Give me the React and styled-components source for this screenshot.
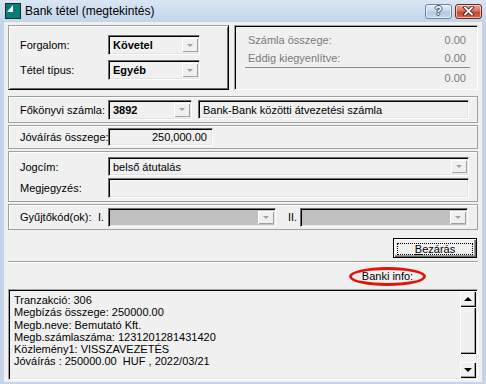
import React from 'react';
import styled, { createGlobalStyle } from 'styled-components';

const GlobalStyle = createGlobalStyle`
  html, body { margin: 0; padding: 0; background: #c4d5eb; }
  body {
    font-family: "Liberation Sans", Arial, sans-serif;
    font-size: 11px;
    color: #000;
  }
`;

const Window = styled.div`
  width: 486px;
  height: 384px;
  display: flex;
  flex-direction: column;
  background: #c4d5eb;
  overflow: hidden;
`;

const TitleBar = styled.div`
  height: 22px;
  flex-shrink: 0;
  display: flex;
  align-items: center;
  padding: 0 4px 0 5px;
  background: linear-gradient(to bottom, #d9e5f3, #c3d5eb);
`;

const TitleText = styled.span`
  margin-left: 4px;
  font-size: 12px;
  color: #000;
  flex: 1;
`;

const CaptionButton = styled.div`
  width: 27px;
  height: 15px;
  box-sizing: border-box;
  margin-left: ${p => (p.$close ? '3px' : '0')};
  border: 1px solid ${p => (p.$close ? '#6e2a22' : '#6e84a3')};
  border-radius: 3px;
  display: flex;
  align-items: center;
  justify-content: center;
  background: ${p =>
    p.$close
      ? 'linear-gradient(to bottom, #e9a99c 0%, #d7705f 45%, #c24832 55%, #cf6a50 100%)'
      : 'linear-gradient(to bottom, #e4edf8 0%, #c9d9ee 45%, #b4c9e4 55%, #c7d8ee 100%)'};
  box-shadow: inset 0 0 0 1px rgba(255, 255, 255, 0.55);
`;

const HelpGlyph = styled.span`
  font-family: "Liberation Sans", Arial, sans-serif;
  font-weight: bold;
  font-size: 12px;
  line-height: 1;
  color: #fff;
  text-shadow: 1px 0 #3a4f6e, -1px 0 #3a4f6e, 0 1px #3a4f6e, 0 -1px #3a4f6e;
`;

const Body = styled.div`
  flex: 1;
  margin: 0 4px 2px 4px;
  background: #f0f0f0;
  display: flex;
  flex-direction: column;
  padding: 3px 4px 0 4px;
`;

const TopRow = styled.div`
  display: flex;
  height: 65px;
  gap: 5px;
  flex-shrink: 0;
`;

const RaisedPanel = styled.div`
  width: 221px;
  box-sizing: border-box;
  border: 1px solid;
  border-color: #a0a0a0 #000 #000 #a0a0a0;
  box-shadow: inset 1px 1px #fff, inset -1px -1px #696969;
  padding: 9px 0 0 11px;
  display: grid;
  grid-template-columns: 88px 92px;
  grid-auto-rows: 20px;
  row-gap: 5px;
  align-items: center;
`;

const SunkenPanel = styled.div`
  flex: 1;
  box-sizing: border-box;
  border: 1px solid;
  border-color: #a0a0a0 #fff #fff #a0a0a0;
  box-shadow: inset 1px 1px #000;
  padding: 4px 11px 0 13px;
  display: flex;
  flex-direction: column;
  color: #7a7a7a;
`;

const SumRow = styled.div`
  height: ${p => p.$h}px;
  display: flex;
  align-items: center;
  justify-content: space-between;
`;

const SumLine = styled.div`
  height: 1px;
  background: #8a8a8a;
  margin: 0 -4px 0 -3px;
`;

const Panel = styled.div`
  box-sizing: border-box;
  height: ${p => p.$h}px;
  margin-top: ${p => p.$mt}px;
  flex-shrink: 0;
  border: 1px solid #a0a0a0;
  box-shadow: inset 1px 1px #fff;
  padding: ${p => p.$pad || '0 8px 0 11px'};
  display: flex;
  flex-direction: ${p => (p.$col ? 'column' : 'row')};
  align-items: ${p => (p.$col ? 'stretch' : 'center')};
  gap: ${p => p.$gap || 0}px;
`;

const Row = styled.div`
  display: flex;
  align-items: center;
`;

const Label = styled.span`
  width: ${p => p.$w || 88}px;
  flex-shrink: 0;
  white-space: nowrap;
`;

const Sunken = styled.div`
  box-sizing: border-box;
  height: ${p => p.$h || 19}px;
  width: ${p => (p.$w ? `${p.$w}px` : 'auto')};
  flex: ${p => (p.$w ? '0 0 auto' : '1')};
  border: 1px solid;
  border-color: #6d6d6d #fff #fff #6d6d6d;
  box-shadow: inset 1px 1px #000, inset -1px -1px #e3e3e3;
  background: ${p => (p.$disabled ? '#c0c0c0' : '#f0f0f0')};
  display: flex;
  align-items: center;
  padding: 0 ${p => (p.$right ? '5px' : '0')} 0 ${p => (p.$right ? '0' : '4px')};
  justify-content: ${p => (p.$right ? 'flex-end' : 'flex-start')};
  font-weight: ${p => (p.$bold ? 'bold' : 'normal')};
  white-space: nowrap;
`;

const ComboText = styled.span`
  flex: 1;
  overflow: hidden;
`;

const DropButton = styled.div`
  width: 16px;
  align-self: stretch;
  margin: 2px 1px 2px 0;
  box-sizing: border-box;
  background: #f0f0f0;
  box-shadow: inset 1px 1px #fff, inset -1px -1px #a0a0a0;
  display: flex;
  align-items: center;
  justify-content: center;
  &::after {
    content: '';
    border-left: 3px solid transparent;
    border-right: 3px solid transparent;
    border-top: 3px solid #a0a0a0;
  }
`;

const Combo = ({ text, ...rest }) => (
  <Sunken {...rest}>
    <ComboText>{text}</ComboText>
    <DropButton />
  </Sunken>
);

const Roman = styled.span`
  width: ${p => p.$w}px;
  flex-shrink: 0;
  margin-left: ${p => p.$ml || 0}px;
`;

const ButtonRow = styled.div`
  margin-top: 8px;
  display: flex;
  justify-content: flex-end;
  padding-right: 1px;
  flex-shrink: 0;
`;

const PushButton = styled.div`
  width: 84px;
  height: 20px;
  box-sizing: border-box;
  border: 1px solid #000;
  background: #f0f0f0;
  box-shadow: inset 1px 1px #fff, inset -1px -1px #696969, inset -2px -2px #a0a0a0;
  padding: 4px 3px 2px 3px;
  display: flex;
`;

const FocusRing = styled.div`
  flex: 1;
  border: 1px dotted #000;
  display: flex;
  align-items: center;
  justify-content: center;
  line-height: 1;
  & u { text-decoration: underline; }
`;

const Separator = styled.div`
  margin-top: 3px;
  border-top: 1px solid #a0a0a0;
  border-bottom: 1px solid #fff;
  flex-shrink: 0;
`;

const InfoRow = styled.div`
  height: 26px;
  flex-shrink: 0;
  display: flex;
  align-items: center;
  justify-content: flex-end;
  padding-right: 52px;
`;

const Circled = styled.span`
  width: 77px;
  height: 19px;
  box-sizing: border-box;
  border: 3px solid #e3120b;
  border-radius: 50%;
  display: flex;
  align-items: center;
  justify-content: center;
`;

const Memo = styled.div`
  height: 91px;
  box-sizing: border-box;
  flex-shrink: 0;
  border: 1px solid;
  border-color: #a0a0a0 #fff #fff #a0a0a0;
  box-shadow: inset 1px 1px #000, inset -1px -1px #e3e3e3;
  display: flex;
`;

const MemoText = styled.div`
  flex: 1;
  padding: 4px 0 0 5px;
  line-height: 12.3px;
  white-space: pre;
`;

const ScrollBar = styled.div`
  width: 16px;
  margin: 1px 1px 1px 0;
  display: flex;
  flex-direction: column;
`;

const ScrollPart = styled.div`
  height: ${p => p.$h}px;
  flex-shrink: 0;
  box-sizing: border-box;
  background: #f0f0f0;
  box-shadow: inset 1px 1px #fff, inset -1px -1px #000, inset -2px -2px #a0a0a0;
  display: flex;
  align-items: center;
  justify-content: center;
`;

const Arrow = styled.span`
  width: 0;
  height: 0;
  border-left: 4px solid transparent;
  border-right: 4px solid transparent;
  ${p => (p.$up ? 'border-bottom: 4px solid #000;' : 'border-top: 4px solid #000;')}
`;

const Track = styled.div`
  height: 8px;
  flex-shrink: 0;
  background: repeating-conic-gradient(#fff 0 25%, #e6e6e6 0 50%) 0 0 / 2px 2px;
`;

const AppIcon = () => (
  <svg width="16" height="16" viewBox="0 0 16 16">
    <rect x="0.5" y="0.5" width="15" height="15" fill="#077d78" stroke="#1c2b2a" />
    <polygon points="2,9 8,2 8,9" fill="#fff" />
  </svg>
);

const CloseGlyph = () => (
  <svg width="13" height="10" viewBox="0 0 13 10">
    <path d="M3 1.5 L10 8.5 M10 1.5 L3 8.5" stroke="#5a1d16" strokeWidth="3.6" strokeLinecap="square" />
    <path d="M3 1.5 L10 8.5 M10 1.5 L3 8.5" stroke="#fff" strokeWidth="1.8" strokeLinecap="square" />
  </svg>
);

const memoLines = [
  'Tranzakció: 306',
  'Megbízás összege: 250000.00',
  'Megb.neve: Bemutató Kft.',
  'Megb.számlaszáma: 1231201281431420',
  'Közlemény1: VISSZAVEZETÉS',
  'Jóváírás : 250000.00  HUF , 2022/03/21',
];

export default function App() {
  return (
    <>
      <GlobalStyle />
      <Window>
        <TitleBar>
          <AppIcon />
          <TitleText>Bank tétel (megtekintés)</TitleText>
          <CaptionButton><HelpGlyph>?</HelpGlyph></CaptionButton>
          <CaptionButton $close><CloseGlyph /></CaptionButton>
        </TitleBar>
        <Body>
          <TopRow>
            <RaisedPanel>
              <Label>Forgalom:</Label>
              <Combo text="Követel" $bold $h={20} />
              <Label>Tétel típus:</Label>
              <Combo text="Egyéb" $bold $h={20} />
            </RaisedPanel>
            <SunkenPanel>
              <SumRow $h={19}><span>Számla összege:</span><span>0.00</span></SumRow>
              <SumRow $h={18}><span>Eddig kiegyenlítve:</span><span>0.00</span></SumRow>
              <SumLine />
              <SumRow $h={20}><span />0.00</SumRow>
            </SunkenPanel>
          </TopRow>

          <Panel $h={27} $mt={6}>
            <Label>Főkönyvi számla:</Label>
            <Combo text="3892" $bold $w={84} $h={20} />
            <Sunken $h={19} style={{ marginLeft: 6 }}>Bank-Bank közötti átvezetési számla</Sunken>
          </Panel>

          <Panel $h={24} $mt={2}>
            <Label>Jóváírás összege:</Label>
            <Sunken $w={105} $h={18} $right>250,000.00</Sunken>
          </Panel>

          <Panel $h={51} $mt={2} $col $gap={2} $pad="5px 8px 0 11px">
            <Row>
              <Label>Jogcím:</Label>
              <Combo text="belső átutalás" $h={19} />
            </Row>
            <Row>
              <Label>Megjegyzés:</Label>
              <Sunken $h={20} />
            </Row>
          </Panel>

          <Panel $h={26} $mt={2} $pad="0 9px 0 11px">
            <Label $w={78}>Gyűjtőkód(ok):</Label>
            <Roman $w={10}>I.</Roman>
            <Combo text="" $w={168} $h={19} $disabled />
            <Roman $w={12} $ml={12}>II.</Roman>
            <Combo text="" $h={19} $disabled />
          </Panel>

          <ButtonRow>
            <PushButton>
              <FocusRing><span><u>B</u>ezárás</span></FocusRing>
            </PushButton>
          </ButtonRow>

          <Separator />

          <InfoRow>
            <Circled>Banki info:</Circled>
          </InfoRow>

          <Memo>
            <MemoText>{memoLines.join('\n')}</MemoText>
            <ScrollBar>
              <ScrollPart $h={16}><Arrow $up /></ScrollPart>
              <ScrollPart $h={47} />
              <Track />
              <ScrollPart $h={16}><Arrow /></ScrollPart>
            </ScrollBar>
          </Memo>
        </Body>
      </Window>
    </>
  );
}
